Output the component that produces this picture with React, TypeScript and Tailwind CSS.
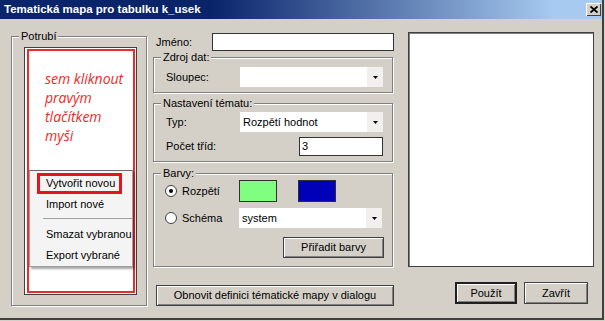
import React from 'react';

const Group = ({ title, className, children }: { title: string; className?: string; children?: React.ReactNode }) => (
  <div className={`relative border border-[#808080] shadow-[inset_1px_1px_0_#fff,1px_1px_0_#fff] ${className ?? ''}`}>
    <span className="absolute -top-[7px] left-[7px] bg-[#d4d0c8] px-[2px] text-[11px] leading-[13px]">{title}</span>
    {children}
  </div>
);

const Select = ({ value }: { value?: string }) => (
  <div className="flex h-[20px] w-[143px] items-center bg-white">
    <span className="flex-1 pl-[3px] text-[11px]">{value}</span>
    <span className="flex h-full w-[16px] items-center justify-center bg-[#f1f0ee]">
      <svg width="5" height="3" viewBox="0 0 5 3">
        <path d="M0 0h5L2.5 3z" fill="#000" />
      </svg>
    </span>
  </div>
);

const Button = ({ label, className }: { label: string; className?: string }) => (
  <div
    className={`flex items-center justify-center bg-[#d4d0c8] text-[11px] shadow-[inset_1px_1px_0_#fff,inset_-1px_-1px_0_#808080] ${className ?? ''}`}
  >
    {label}
  </div>
);

const Radio = ({ checked, label }: { checked?: boolean; label: string }) => (
  <div className="flex w-[74px] items-center gap-[5px]">
    <span className="flex h-[12px] w-[12px] items-center justify-center rounded-full border border-[#404040] bg-white">
      {checked && <span className="h-[4px] w-[4px] rounded-full bg-black" />}
    </span>
    <span className="text-[11px]">{label}</span>
  </div>
);

export default function App() {
  return (
    <div className="h-[321px] w-[605px] overflow-hidden bg-[#d4d0c8] font-['Liberation_Sans',Arial,sans-serif] text-black">
      <div className="flex h-[320px] w-[604px] flex-col border-b-2 border-r-2 border-[#404040]">
        {/* Title bar */}
        <div className="flex h-[19px] shrink-0 items-center bg-[linear-gradient(to_right,#0a246a_35%,#a6caf0_92%)] pl-[4px]">
          <span className="text-[11.5px] font-bold text-white">Tematická mapa pro tabulku k_usek</span>
          <div className="ml-auto mr-[1px] flex h-[13px] w-[15px] items-center justify-center bg-[#d4d0c8] shadow-[inset_1px_1px_0_#fff,inset_-1px_-1px_0_#404040]">
            <svg width="8" height="7" viewBox="0 0 8 7">
              <path d="M0.5 0.5 7.5 6.5M7.5 0.5 0.5 6.5" stroke="#000" strokeWidth="1.8" />
            </svg>
          </div>
        </div>

        {/* Body */}
        <div className="flex flex-1 pl-[11px]">
          {/* Potrubí */}
          <Group title="Potrubí" className="mt-[17px] h-[270px] w-[136px] pl-[12px] pt-[10px]">
            <div className="h-[248px] w-[113px] border border-[#404040] bg-white p-[1px] pl-[2px]">
              <div className="relative h-full w-full border-2 border-[#ee2a2a] pl-[16px] pt-[18px]">
                <p className="font-['Open_Sans',sans-serif] text-[14px] italic leading-[19px] text-[#ee2a2a]">
                  sem kliknout
                  <br />
                  pravým
                  <br />
                  tlačítkem
                  <br />
                  myši
                </p>

                {/* Context menu */}
                <div className="absolute left-0 top-[119px] w-[104px] border border-[#a0a0a0] border-t-[#6a6a6a] bg-[#f4f4f4] text-[11px] shadow-[2px_2px_2px_rgba(0,0,0,0.35)]">
                  <div className="flex h-[22px] items-start pl-[7px] pt-[2px]">
                    <span className="flex h-[21px] items-center border-[3px] border-[#e8141c] pl-[6px] pr-[4px]">Vytvořit novou</span>
                  </div>
                  <div className="flex h-[22px] items-center pl-[16px]">Import nové</div>
                  <div className="flex h-[8px] items-center pl-[13px]">
                    <div className="h-[2px] w-full border-t border-[#a0a0a0] border-b-white" />
                  </div>
                  <div className="flex h-[22px] items-center pl-[16px]">Smazat vybranou</div>
                  <div className="flex h-[21px] items-center pl-[16px]">Export vybrané</div>
                </div>
              </div>
            </div>
          </Group>

          {/* Middle column */}
          <div className="ml-[6px] flex w-[241px] flex-col">
            <div className="mt-[14px] flex h-[18px] items-center">
              <span className="w-[59px] pl-[3px] text-[11px]">Jméno:</span>
              <div className="h-[18px] w-[182px] border border-[#333] bg-white" />
            </div>

            <Group title="Zdroj dat:" className="mt-[6px] h-[36px] w-[240px] pl-[12px] pt-[9px]">
              <div className="flex items-center">
                <span className="w-[74px] text-[11px]">Sloupec:</span>
                <Select />
              </div>
            </Group>

            <Group title="Nastavení tématu:" className="mt-[10px] h-[59px] w-[240px] pl-[12px] pt-[8px]">
              <div className="flex items-center">
                <span className="w-[74px] text-[11px]">Typ:</span>
                <Select value="Rozpětí hodnot" />
              </div>
              <div className="mt-[5px] flex items-center">
                <span className="w-[133px] text-[11px]">Počet tříd:</span>
                <div className="flex h-[19px] w-[84px] items-center border border-[#333] bg-white pl-[2px] text-[11px]">3</div>
              </div>
            </Group>

            <Group title="Barvy:" className="mt-[11px] h-[94px] w-[240px] pl-[11px] pr-[8px] pt-[6px]">
              <div className="flex h-[22px] items-center">
                <Radio checked label="Rozpětí" />
                <div className="h-[22px] w-[38px] border border-[#303030] bg-[#80ff80]" />
                <div className="ml-[21px] h-[22px] w-[38px] border border-[#303030] bg-[#0000b8]" />
              </div>
              <div className="mt-[6px] flex items-center">
                <Radio label="Schéma" />
                <Select value="system" />
              </div>
              <div className="mt-[9px] flex justify-end">
                <Button label="Přiřadit barvy" className="h-[21px] w-[101px] border border-[#404040]" />
              </div>
            </Group>

            <Button
              label="Obnovit definici tématické mapy v dialogu"
              className="ml-[3px] mt-[18px] h-[21px] w-[238px] border border-[#404040]"
            />
          </div>

          {/* Right column */}
          <div className="ml-[14px] flex w-[186px] flex-col">
            <div className="mt-[13px] h-[235px] w-[186px] border border-[#404040] bg-white shadow-[inset_1px_1px_0_#808080]" />
            <div className="mt-[15px] flex justify-end gap-[7px] pr-[6px]">
              <Button label="Použít" className="h-[22px] w-[62px] border-2 border-[#202020]" />
              <Button label="Zavřít" className="h-[22px] w-[64px] border border-[#404040]" />
            </div>
          </div>
        </div>
      </div>
    </div>
  );
}
